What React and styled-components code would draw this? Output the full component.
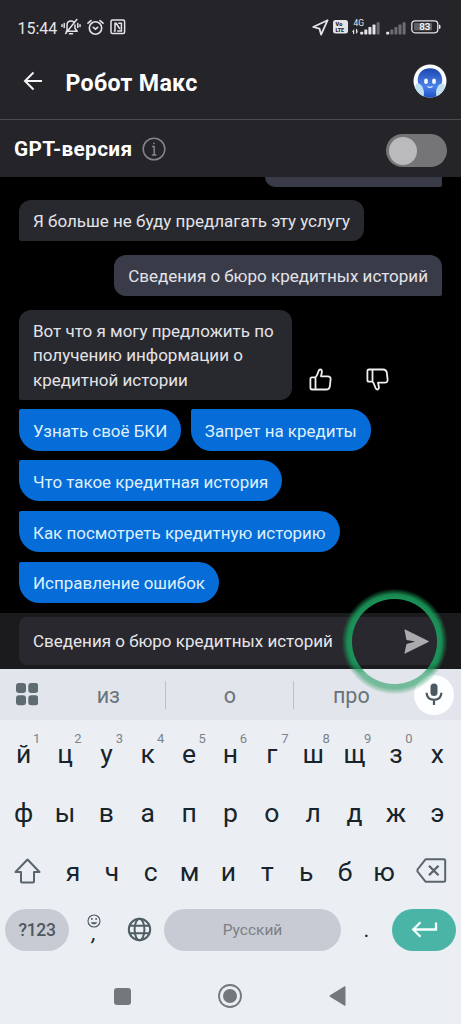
import React from 'react';
import styled, { createGlobalStyle } from 'styled-components';

const GlobalStyle = createGlobalStyle`
  * { box-sizing: border-box; }
  body {
    margin: 0;
    background: #000;
    font-family: Roboto, "Noto Sans", sans-serif;
  }
  svg { display: block; flex: none; }
`;

const Phone = styled.div`
  position: relative;
  display: grid;
  grid-template-rows: 54px 66px 57px 436px 56px 51px 304px;
  width: 461px;
  height: 1024px;
  overflow: hidden;
`;

const StatusBar = styled.div`
  display: flex;
  align-items: center;
  padding: 0 20px 0 17.5px;
  background: #242429;
  color: #e4e4e8;
`;

const Clock = styled.span`
  width: 43px;
  padding-top: 2px;
  font-size: 16px;
  white-space: nowrap;
`;

const StatusIcons = styled.div`
  display: flex;
  align-items: center;
  gap: ${({ $gap }) => $gap}px;
  margin-left: ${({ $push }) => ($push ? 'auto' : '0')};
`;

const Header = styled.header`
  display: flex;
  align-items: center;
  padding: 0 14px 11px 23px;
  background: #242429;
  border-bottom: 1px solid #4b4b50;
`;

const Title = styled.h1`
  flex: 1;
  margin: 4px 0 0 22.5px;
  color: #fff;
  font-size: 23.2px;
  font-weight: 700;
  line-height: 28px;
  letter-spacing: 0.3px;
`;

const VersionBar = styled.div`
  display: flex;
  align-items: center;
  padding: 0 14px;
  background: #242429;
`;

const VersionLabel = styled.span`
  margin-right: 9.5px;
  padding-top: 1px;
  color: #fff;
  font-size: 20.8px;
  font-weight: 700;
  letter-spacing: 0.35px;
`;

const Toggle = styled.div`
  display: flex;
  align-items: center;
  width: 61px;
  height: 33px;
  margin: 4px 0 0 auto;
  padding-left: 3px;
  border-radius: 17px;
  background: #757578;
`;

const Knob = styled.div`
  width: 28px;
  height: 28px;
  border-radius: 50%;
  background: #bababd;
`;

const Chat = styled.main`
  display: flex;
  flex-direction: column;
  padding: 0 19px;
  background: #000;
`;

const Bubble = styled.div`
  align-self: ${({ $mine }) => ($mine ? 'flex-end' : 'flex-start')};
  min-width: ${({ $minWidth }) => $minWidth || 0}px;
  margin-top: 13.5px;
  padding: 9px 14px 8px;
  border-radius: ${({ $mine }) => ($mine ? '12px 12px 2px 12px' : '12px 12px 12px 2px')};
  background: ${({ $mine }) => ($mine ? '#3a3b49' : '#28292e')};
  color: #e3e3e8;
  font-size: 17px;
  line-height: 24.4px;
  white-space: pre-line;
`;

const ClippedBubble = styled.div`
  align-self: flex-end;
  flex: none;
  width: 177px;
  height: 9.5px;
  border-radius: 0 0 2px 12px;
  background: #3a3b49;
`;

const AnswerRow = styled.div`
  display: flex;
  align-items: flex-end;
`;

const Votes = styled.div`
  display: flex;
  gap: 34px;
  padding: 0 0 9px 17px;
`;

const Chips = styled.div`
  display: flex;
  flex-wrap: wrap;
  gap: 9.5px;
  margin-top: 9.3px;
`;

const Chip = styled.button`
  height: 41.3px;
  padding: 2px 14px 0;
  border: 0;
  border-radius: 2px 20.6px 20.6px 20.6px;
  background: #056cd8;
  color: #dff0fb;
  font-family: inherit;
  font-size: 16.95px;
  white-space: nowrap;
`;

const InputBar = styled.div`
  padding: 4px 19px;
  background: #1b1b1d;
`;

const Field = styled.div`
  display: flex;
  align-items: center;
  justify-content: space-between;
  height: 48px;
  padding: 0 13px 0 14px;
  border-radius: 8px;
  background: #28282e;
  color: #e6e6ea;
  font-size: 17px;
`;

const TapRing = styled.div`
  position: absolute;
  left: 340px;
  top: 587px;
  width: 109px;
  height: 109px;
  background: radial-gradient(
    circle,
    transparent 42px,
    rgba(28, 154, 92, 0.95) 43px,
    rgba(26, 150, 88, 0.9) 47px,
    rgba(22, 140, 80, 0.4) 50.5px,
    transparent 53px
  );
  mask-image: linear-gradient(#000 70%, rgba(0, 0, 0, 0.6) 80%);
`;

const Suggestions = styled.div`
  display: flex;
  align-items: center;
  padding: 0 7px 0 16px;
  background: #e2e5eb;
  color: #68737a;
`;

const Suggestion = styled.span`
  flex: ${({ $width }) => `0 0 ${$width}px`};
  height: 28px;
  padding-left: ${({ $shift }) => $shift || 0}px;
  border-right: ${({ $last }) => ($last ? '0' : '1px solid #bcc1c7')};
  font-size: 21.5px;
  line-height: 29px;
  text-align: center;
`;

const MicButton = styled.div`
  display: flex;
  align-items: center;
  justify-content: center;
  width: 40px;
  height: 40px;
  margin-left: auto;
  border-radius: 50%;
  background: #fdfeff;
`;

const Keyboard = styled.div`
  padding-top: 3px;
  background: #ebeff3;
  color: #17242b;
`;

const KeyRow = styled.div`
  display: flex;
  align-items: center;
  height: 59px;
  padding: 0 ${({ $side }) => $side}px;
`;

const Letters = styled.div`
  display: flex;
  flex: 1;
  padding: 2px ${({ $side }) => $side || 0}px 0;
`;

const Key = styled.div`
  position: relative;
  flex: 1;
  font-size: 26.5px;
  line-height: 59px;
  text-align: center;
`;

const Hint = styled.span`
  position: absolute;
  left: 30px;
  top: 7px;
  color: #7b8388;
  font-size: 13px;
  line-height: 16px;
`;

const Pill = styled.div`
  display: flex;
  align-items: center;
  justify-content: center;
  width: ${({ $width }) => $width}px;
  height: 42px;
  border-radius: 21px;
  background: ${({ $accent }) => ($accent ? '#4ab4a6' : '#c8cbd3')};
  color: ${({ $muted }) => ($muted ? '#7b8087' : '#4d585f')};
  font-size: ${({ $muted }) => ($muted ? 15.5 : 17.500)}px;
  font-weight: ${({ $muted }) => ($muted ? 400 : 500)};
  letter-spacing: ${({ $muted }) => ($muted ? 0 : '-0.3px')};
`;

const CommaKey = styled.div`
  display: flex;
  flex-direction: column;
  align-items: center;
  width: 50px;
  height: 32px;
  font-size: 22px;
  font-style: italic;
  line-height: 10px;
`;

const GlobeKey = styled.div`
  width: 45px;
  padding-left: 7.5px;
`;

const DotKey = styled.div`
  flex: 1;
  font-size: 22px;
  text-align: center;
`;

const SystemNav = styled.nav`
  display: flex;
  align-items: center;
  justify-content: space-between;
  height: 65px;
  padding: 9px 115px 0 114px;
`;

const topRow = ['й', 'ц', 'у', 'к', 'е', 'н', 'г', 'ш', 'щ', 'з', 'х'];
const middleRow = ['ф', 'ы', 'в', 'а', 'п', 'р', 'о', 'л', 'д', 'ж', 'э'];
const bottomRow = ['я', 'ч', 'с', 'м', 'и', 'т', 'ь', 'б', 'ю'];
const chips = [
  'Узнать своё БКИ',
  'Запрет на кредиты',
  'Что такое кредитная история',
  'Как посмотреть кредитную историю',
  'Исправление ошибок',
];

const BellOffIcon = () => (
  <svg width="20" height="18" viewBox="0 0 20 18" fill="none" stroke="#e4e4e8" strokeWidth="1.5" strokeLinecap="round">
    <path d="M5.2 13.2h10.2M6 12V7.2C6 4.500 7.600 3 10 3c1.200 0 2 .3 2.700.9M14 7v3.500l2.200 2.700M4.600 15.500 15.800 1.500M8.500 15.800h3" />
    <path d="M3.200 5.500v4M1 6.700v1.800M16.800 5.500v4M19 6.700v1.800" />
  </svg>
);

const AlarmIcon = () => (
  <svg width="17" height="17" viewBox="0 0 17 17" fill="none" stroke="#e4e4e8" strokeWidth="1.6" strokeLinecap="round">
    <circle cx="8.5" cy="9" r="6.2" />
    <path d="M1 4.200 4 1.600M16 4.200l-3-2.600M6.300 8.300l2.200 1.900 2.200-1.900" />
  </svg>
);

const NfcIcon = () => (
  <svg width="16" height="16" viewBox="0 0 16 16" fill="none" stroke="#e4e4e8" strokeWidth="1.5">
    <rect x="1" y="1" width="13.6" height="13.6" rx="1.5" />
    <path d="M3.800 12H5V4.300h1.200L9.800 10M8.200 4.300h3.200V12H7.200" />
  </svg>
);

const LocationIcon = () => (
  <svg width="17" height="17" viewBox="0 0 17 17" fill="none" stroke="#e4e4e8" strokeWidth="1.8" strokeLinejoin="round">
    <path d="M15.600 1.200 1.200 8l6.200 1.600 1.700 6Z" />
  </svg>
);

const VolteIcon = () => (
  <svg width="15" height="14" viewBox="0 0 15 14" fontFamily="Roboto, sans-serif" fontWeight="900">
    <rect width="15" height="13.500" rx="2.500" fill="#e4e4e8" />
    <text x="2.600" y="5.900" fontSize="5.600" fill="#242429">Vo</text>
    <text x="2.400" y="12.100" fontSize="5.300" fill="#242429">LTE</text>
  </svg>
);

const bars = [0, 1, 2, 3, 4];

const SignalIcon = ({ level, network }) => (
  <svg width={network ? 29 : 21} height="17" viewBox={network ? '0 0 29 17' : '8 0 21 17'} fill="#e4e4e8">
    {network && (
      <>
        <text x="1.500" y="7" fontSize="8.500" fontFamily="Roboto, sans-serif">4G</text>
        <path d="M2.200 10v5H1v-2H0ZM4 15v-5h1.200v2.600h1Z" />
      </>
    )}
    {bars.map((bar) => (
      <rect
        key={bar}
        x={8.2 + bar * 4.1}
        y={12.8 - bar * 2.4}
        width="3"
        height={2.6 + bar * 2.4}
        rx="0.6"
        opacity={bar < level ? 1 : 0.38}
      />
    ))}
  </svg>
);

const BatteryIcon = () => (
  <svg width="30" height="14" viewBox="0 0 30 14">
    <rect x="0.8" y="0.8" width="26" height="12" rx="3.2" fill="none" stroke="#e4e4e8" strokeWidth="1.3" />
    <rect x="3" y="3" width="18" height="7.6" rx="1" fill="#606064" />
    <path d="M28 4.700c1.300 0 1.600.6 1.600 2.100S29.300 9 28 9Z" fill="#e4e4e8" />
    <text x="13.700" y="10.200" fontSize="9.800" fontWeight="500" fontFamily="Roboto, sans-serif" textAnchor="middle" fill="#fff">83</text>
  </svg>
);

const BackIcon = () => (
  <svg width="20" height="20" viewBox="0 0 20 20" fill="none" stroke="#f4f4f6" strokeWidth="2">
    <path d="M19 10H2.500M10.500 1.500 2 10l8.500 8.500" />
  </svg>
);

const Avatar = () => (
  <svg width="34" height="34" viewBox="0 0 34 34">
    <defs>
      <clipPath id="face">
        <circle cx="17" cy="17" r="16.500" />
      </clipPath>
      <linearGradient id="skin" x1="0" y1="0" x2="0" y2="1">
        <stop offset="0" stopColor="#1c46ae" />
        <stop offset="0.600" stopColor="#4b83ea" />
        <stop offset="1" stopColor="#1d50c4" />
      </linearGradient>
    </defs>
    <circle cx="17" cy="17" r="16.500" fill="#fafcff" />
    <g clipPath="url(#face)">
      <path d="M5 19C3.500 10 9 4.200 17 4.200S30.500 10 29 19l-5 6v9H10v-9Z" fill="url(#skin)" />
      <path d="M3 20c4-2 7 2 8 8l-.5 7H0ZM31 20c-4-2-7 2-8 8l.5 7H34Z" fill="#bfe0f3" />
    </g>
    <rect x="11.200" y="14.500" width="3.600" height="5.500" rx="1.800" fill="#f3f8ff" />
    <rect x="19.200" y="14.500" width="3.600" height="5.500" rx="1.800" fill="#f3f8ff" />
    <path d="M14.500 22.500q2.500 1.800 5 0" fill="none" stroke="#dbe8ff" strokeWidth="1.200" />
  </svg>
);

const InfoIcon = () => (
  <svg width="24" height="24" viewBox="0 0 24 24" fill="none" stroke="#858589" strokeWidth="1.500">
    <circle cx="12" cy="12" r="10.800" />
    <path d="M10 9.500h2.200V18M9.800 18h4.600" />
    <circle cx="12" cy="6.300" r="0.900" fill="#858589" stroke="none" />
  </svg>
);

const ThumbIcon = ({ down }) => (
  <svg width="23" height="23" viewBox="0 0 23 23" fill="none" stroke="#f0f0f2" strokeWidth="1.800" strokeLinejoin="round">
    <path
      transform={down ? 'matrix(1 0 0 -1 0 23)' : undefined}
      d="M6.500 9.400C8.300 7.600 8.800 5.600 9.500 3.200c.4-1.300 1-1.800 1.900-1.700 1.500.2 1.700 1.500 1.400 3l-.8 3.800h6.700c2.100 0 3.100 1.200 2.900 3l-.7 6.500c-.3 2.600-1.600 3.700-3.900 3.700H3c-1.100 0-1.600-.6-1.600-1.700v-8.700c0-1.100.6-1.700 1.600-1.700h3.500v12.100"
    />
  </svg>
);

const SendIcon = () => (
  <svg width="25" height="25" viewBox="0 0 25 25" fill="#ababae">
    <path d="M1.200.500c-.5-.2-.8.100-.7.600L2.500 11l8.800 1.500L2.500 15 .5 23.900c-.1.500.2.800.7.600l23.200-11.400c.5-.3.500-.9 0-1.200Z" />
  </svg>
);

const GridIcon = () => (
  <svg width="22.300" height="22.300" viewBox="0 0 22.300 22.300" fill="#5e6b71">
    <rect width="10" height="10" rx="3" />
    <rect x="12.300" width="10" height="10" rx="3" />
    <rect y="12.300" width="10" height="10" rx="3" />
    <rect x="12.300" y="12.300" width="10" height="10" rx="3" />
  </svg>
);

const MicIcon = () => (
  <svg width="18" height="23" viewBox="0 0 18 23" fill="none" stroke="#4b5960" strokeWidth="2.200">
    <rect x="5.500" y="0.500" width="7" height="12.500" rx="3.500" fill="#4b5960" stroke="none" />
    <path d="M1.600 9.800c.2 4.500 3.200 7 7.400 7s7.200-2.500 7.400-7M9 17v5" />
  </svg>
);

const ShiftIcon = () => (
  <svg width="27" height="26" viewBox="0 0 27 26" fill="none" stroke="#59656b" strokeWidth="2" strokeLinejoin="round">
    <path d="M13.500 1.500 1.500 14H7v9.500q0 1 1 1h11q1 0 1-1V14h5.500Z" />
  </svg>
);

const BackspaceIcon = () => (
  <svg width="31" height="25" viewBox="0 0 31 25" fill="none" stroke="#59656b" strokeWidth="2" strokeLinejoin="round">
    <path d="M9.500 1.300h18.200q1.500 0 1.500 1.500v19.400q0 1.500-1.500 1.500H9.500L1.500 13.500v-2Z" />
    <path d="m13 7.800 9.500 9.500m0-9.500L13 17.300" strokeWidth="2.300" />
  </svg>
);

const SmileIcon = () => (
  <svg width="14" height="14" viewBox="0 0 14 14" fill="none" stroke="#4b575e" strokeWidth="1.100">
    <circle cx="7" cy="7" r="6" />
    <path d="M3.800 8.200c1.200 2.700 5.200 2.700 6.400 0Z" fill="#4b575e" stroke="none" />
    <circle cx="4.900" cy="5" r="0.900" fill="#4b575e" stroke="none" />
    <circle cx="9.100" cy="5" r="0.900" fill="#4b575e" stroke="none" />
  </svg>
);

const GlobeIcon = () => (
  <svg width="25" height="25" viewBox="0 0 25 25" fill="none" stroke="#4f5d64" strokeWidth="2">
    <circle cx="12.500" cy="12.500" r="10.700" />
    <ellipse cx="12.500" cy="12.500" rx="4.900" ry="10.700" />
    <path d="M2.500 8.700h20M2.500 16.300h20" />
  </svg>
);

const EnterIcon = () => (
  <svg width="27" height="18" viewBox="0 0 27 18" fill="none" stroke="#f2fffd" strokeWidth="2.300">
    <path d="M25 1.500V8.500H2.500M9.500 1.300 2.200 8.500l7.300 7.200" />
  </svg>
);

const App = () => {
  return (
    <>
      <GlobalStyle />
      <Phone>
        <StatusBar>
          <Clock>15:44</Clock>
          <StatusIcons $gap={6}>
            <BellOffIcon />
            <AlarmIcon />
            <NfcIcon />
          </StatusIcons>
          <StatusIcons $gap={4.3} $push>
            <LocationIcon />
            <VolteIcon />
            <SignalIcon level={4} network />
            <SignalIcon level={1} />
            <BatteryIcon />
          </StatusIcons>
        </StatusBar>
        <Header>
          <BackIcon />
          <Title>Робот Макс</Title>
          <Avatar />
        </Header>
        <VersionBar>
          <VersionLabel>GPT-версия</VersionLabel>
          <InfoIcon />
          <Toggle>
            <Knob />
          </Toggle>
        </VersionBar>
        <Chat>
          <ClippedBubble />
          <Bubble>Я больше не буду предлагать эту услугу</Bubble>
          <Bubble $mine>Сведения о бюро кредитных историй</Bubble>
          <AnswerRow>
            <Bubble $minWidth={273}>{'Вот что я могу предложить по\nполучению информации о\nкредитной истории'}</Bubble>
            <Votes>
              <ThumbIcon />
              <ThumbIcon down />
            </Votes>
          </AnswerRow>
          <Chips>
            {chips.map((label) => (
              <Chip key={label}>{label}</Chip>
            ))}
          </Chips>
        </Chat>
        <InputBar>
          <Field>
            Сведения о бюро кредитных историй
            <SendIcon />
          </Field>
        </InputBar>
        <Suggestions>
          <GridIcon />
          <Suggestion $width={128} $shift={13}>из</Suggestion>
          <Suggestion $width={128}>о</Suggestion>
          <Suggestion $width={114} $last>про</Suggestion>
          <MicButton>
            <MicIcon />
          </MicButton>
        </Suggestions>
        <Keyboard>
          <KeyRow $side={3}>
            <Letters>
              {topRow.map((letter, i) => (
                <Key key={letter}>
                  {letter}
                  {i < 10 && <Hint>{(i + 1) % 10}</Hint>}
                </Key>
              ))}
            </Letters>
          </KeyRow>
          <KeyRow $side={3}>
            <Letters>
              {middleRow.map((letter) => (
                <Key key={letter}>{letter}</Key>
              ))}
            </Letters>
          </KeyRow>
          <KeyRow $side={14}>
            <ShiftIcon />
            <Letters $side={12.5}>
              {bottomRow.map((letter) => (
                <Key key={letter}>{letter}</Key>
              ))}
            </Letters>
            <BackspaceIcon />
          </KeyRow>
          <KeyRow $side={5}>
            <Pill $width={64}>?123</Pill>
            <CommaKey>
              <SmileIcon />
              ,
            </CommaKey>
            <GlobeKey>
              <GlobeIcon />
            </GlobeKey>
            <Pill $width={177} $muted>Русский</Pill>
            <DotKey>.</DotKey>
            <Pill $width={64} $accent>
              <EnterIcon />
            </Pill>
          </KeyRow>
          <SystemNav>
            <svg width="17" height="17" viewBox="0 0 17 17" fill="#75787b">
              <rect width="17" height="17" rx="3" />
            </svg>
            <svg width="24" height="24" viewBox="0 0 24 24" fill="#75787b">
              <circle cx="12" cy="12" r="11" fill="none" stroke="#75787b" strokeWidth="1.800" />
              <circle cx="12" cy="12" r="7" />
            </svg>
            <svg width="17" height="20" viewBox="0 0 17 20" fill="#75787b">
              <path d="M1 9.200 15.200.400q1.300-.7 1.300.7v17.800q0 1.400-1.300.7L1 10.800q-1-.8 0-1.600Z" />
            </svg>
          </SystemNav>
        </Keyboard>
        <TapRing />
      </Phone>
    </>
  );
};

export default App;
